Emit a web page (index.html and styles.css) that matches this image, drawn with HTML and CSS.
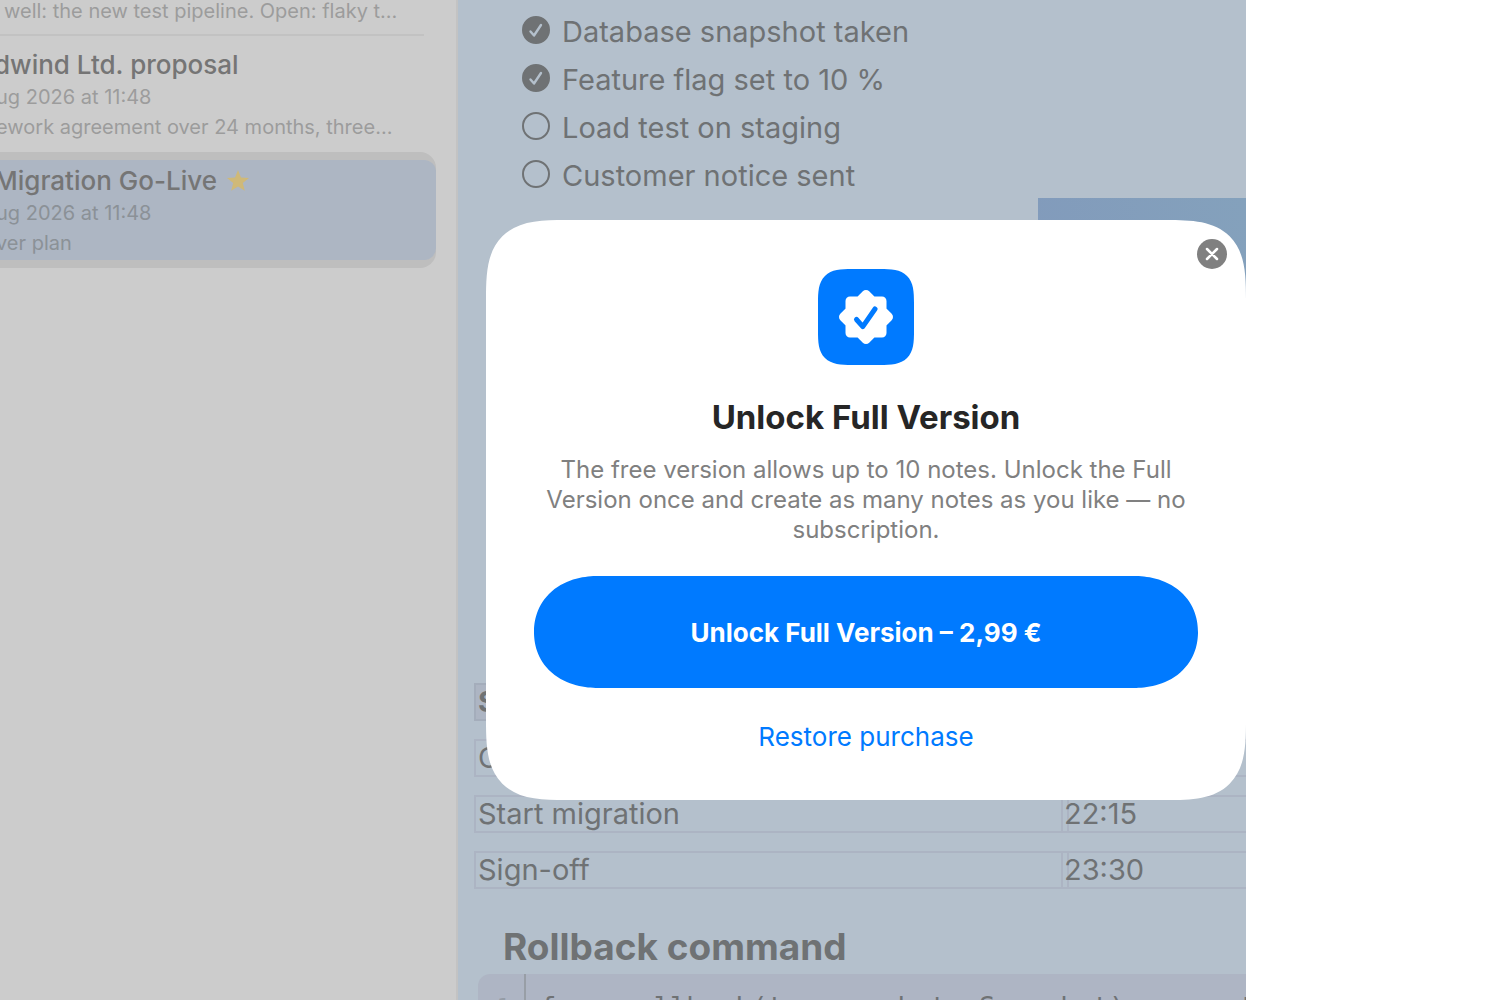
FILE: index.html
```html
<!DOCTYPE html>
<html lang="en">
<head>
    <meta charset="UTF-8">
    <meta name="viewport" content="width=device-width, initial-scale=1.0">
    <title>Notes</title>
    <link rel="stylesheet" href="styles.css">
</head>
<body>
    <div class="app">
        <aside class="sidebar">
            <article class="note">
                <p>well: the new test pipeline. Open: flaky t...</p>
            </article>
            <article class="note">
                <h3>dwind Ltd. proposal</h3>
                <p>ug 2026 at 11:48</p>
                <p>ework agreement over 24 months, three...</p>
            </article>
            <article class="note selected">
                <div class="note-fill">
                    <h3>Migration Go-Live
                        <svg class="star" viewBox="0 0 24 24"><path d="M12 1l3 7.400 8 .5-6.200 5.100 2 7.800L12 17.500l-6.800 4.300 2-7.800L1 8.900l8-.5z"/></svg>
                    </h3>
                    <p>ug 2026 at 11:48</p>
                    <p>ver plan</p>
                </div>
            </article>
        </aside>

        <main class="content">
            <ul class="checklist">
                <li><label><span class="tick"><input type="checkbox" checked><svg viewBox="0 0 28 28"><path d="M8.500 15.500l3.500 4L19 9"/></svg></span>Database snapshot taken</label></li>
                <li><label><span class="tick"><input type="checkbox" checked><svg viewBox="0 0 28 28"><path d="M8.500 15.500l3.500 4L19 9"/></svg></span>Feature flag set to 10 %</label></li>
                <li><label><span class="tick"><input type="checkbox"></span>Load test on staging</label></li>
                <li><label><span class="tick"><input type="checkbox"></span>Customer notice sent</label></li>
            </ul>
            <div class="picture"></div>
            <table class="plan">
                <tr><th>S</th><th></th></tr>
                <tr><td>C</td><td></td></tr>
                <tr><td>Start migration</td><td>22:15</td></tr>
                <tr><td>Sign-off</td><td>23:30</td></tr>
            </table>
            <h2>Rollback command</h2>
            <div class="code">
                <span class="line-no">1</span>
                <code>func rollback(to snapshot: Snapshot) async t</code>
            </div>
        </main>

        <div class="overlay">
            <section class="dialog" role="dialog" aria-labelledby="dialogTitle">
                <button class="close" aria-label="Close">
                    <svg viewBox="0 0 30 30"><path d="M10 10l10 10M20 10L10 20"/></svg>
                </button>
                <div class="badge">
                    <svg viewBox="0 0 96 96">
                        <path class="seal" d="M48 25.500l6.500 6.500H64v9.500l6.500 6.500-6.500 6.500V64h-9.500L48 70.500 41.500 64H32v-9.500L25.500 48l6.500-6.500V32h9.500z"/>
                        <path class="check" d="M38.500 50.500l6.300 7.200L57 40"/>
                    </svg>
                </div>
                <h1 id="dialogTitle">Unlock Full Version</h1>
                <p>The free version allows up to 10 notes. Unlock the Full Version once and create as many notes as you like — no subscription.</p>
                <button class="buy">Unlock Full Version – 2,99 €</button>
                <button class="restore">Restore purchase</button>
            </section>
        </div>
    </div>
</body>
</html>
```
FILE: styles.css
```css
* { box-sizing: border-box; }
body { margin: 0; background: #fff; font-family: Inter, "Liberation Sans", sans-serif; }
h1, h2, h3, p, ul { margin: 0; padding: 0; }
button { font-family: inherit; border: 0; padding: 0; cursor: pointer; }

.app { position: relative; display: grid; grid-template-columns: 458px 1fr; height: 100vh; margin-right: 254px; overflow: hidden; }

/* note list */
.sidebar { background: #cccccc; border-right: 2px solid #c3c3c3; overflow: hidden; white-space: nowrap; }
.note { margin-right: 32px; padding: 12px 0 12px; border-bottom: 2px solid #c2c2c2; }
.note:first-child { padding: 0 0 8px 4px; margin-top: -4px; }
.note:nth-child(2) { border: 0; padding-bottom: 10px; }
.note h3 { margin-left: -6px; font-size: 26px; line-height: 34px; font-weight: 500; color: #757575; }
.note p { font-size: 20px; line-height: 30px; color: #9c9c9c; }
.note h3 ~ p { margin-left: -4px; }
.note.selected { margin-right: 20px; padding: 8px 0; border: 0; border-radius: 0 16px 16px 0; background: #bebebe; }
.note-fill { height: 100px; padding-top: 4px; border-radius: 0 12px 12px 0; background: #adb6c3; }
.note.selected p { color: #8b9197; }
.star { width: 24px; height: 24px; margin-left: 2px; vertical-align: -3px; fill: #cfb978; }

/* open note */
.content { background: #b4c0cc; color: #6f7274; overflow: hidden; min-width: 0; }
.checklist { list-style: none; padding: 8px 0 0 64px; font-size: 29px; line-height: 48px; height: 198px; }
.checklist label { display: flex; align-items: center; gap: 12px; }
.tick { position: relative; width: 28px; height: 28px; margin-bottom: 4px; }
.tick input { appearance: none; display: block; width: 28px; height: 28px; margin: 0; border: 2px solid #6f7274; border-radius: 50%; }
.tick input:checked { background: #6f7274; }
.tick svg { position: absolute; inset: 0; fill: none; stroke: #b4c0cc; stroke-width: 2.4; stroke-linecap: round; stroke-linejoin: round; }
.picture { height: 467px; margin-left: 580px; background: linear-gradient(80deg, #8199bb, #84a1bc); }

.plan { width: 100%; margin-left: 16px; border-collapse: separate; border-spacing: 0 18px; font-size: 29px; line-height: 34px; table-layout: fixed; }
.plan th, .plan td { position: relative; z-index: 0; height: 38px; padding: 0 2px; border: 2px solid #acb4c3; border-right: 0; text-align: left; }
.plan th { background: #adb5c3; border-color: #a4adbb; }
.plan tr > :first-child { width: 587px; }
.plan td + td { padding-left: 1px; }
.plan td + td::before { content: ""; position: absolute; z-index: -1; left: 4px; top: -2px; bottom: -2px; width: 2px; background: #acb4c3; }

.content h2 { margin: 16px 0 0 45px; font-size: 37px; line-height: 48px; font-weight: 700; }
.code { display: flex; height: 60px; margin: 3px 0 0 20px; border-radius: 12px 0 0 0; background: #aeb5c4; font: 27px/66px "DejaVu Sans Mono", monospace; white-space: pre; }
.line-no { flex: none; width: 48px; padding-right: 14px; border-right: 2px solid #989ea6; color: #959ca6; font-size: 22px; text-align: right; }
.code code { padding-left: 14px; font: inherit; }

/* purchase dialog */
.overlay { position: absolute; inset: 20px 0 0 458px; display: flex; justify-content: flex-end; align-items: center; }
.dialog { position: relative; display: flex; flex-direction: column; align-items: center; width: 760px; padding: 49px 48px 46px; border-radius: 60px; background: #fff; text-align: center; }
.close { position: absolute; top: 19px; right: 19px; width: 30px; height: 30px; border-radius: 50%; background: #808080; }
.close svg { display: block; fill: none; stroke: #fff; stroke-width: 2.5; stroke-linecap: round; }
.badge { width: 96px; height: 96px; border-radius: 24px; background: #007aff; }
.badge .seal { fill: #fff; stroke: #fff; stroke-width: 9; stroke-linejoin: round; }
.badge .check { fill: none; stroke: #007aff; stroke-width: 5; stroke-linecap: round; stroke-linejoin: round; }
.dialog h1 { margin-top: 28px; font-size: 33px; line-height: 48px; font-weight: 700; color: #262626; }
.dialog p { margin-top: 14px; font-size: 24px; line-height: 30px; color: #808080; }
.buy { width: 100%; height: 112px; margin-top: 31px; border-radius: 56px; background: #007aff; color: #fff; font-size: 26px; font-weight: 700; }
.restore { margin-top: 32px; background: none; color: #007aff; font-size: 26px; line-height: 34px; }

/* continuous corners */
@supports (corner-shape: squircle) {
    .dialog { border-radius: 80px; corner-shape: superellipse(1.6); }
    .badge { border-radius: 34px; corner-shape: superellipse(1.6); }
    .buy { border-radius: 64px / 56px; corner-shape: superellipse(1.1); }
}
```
